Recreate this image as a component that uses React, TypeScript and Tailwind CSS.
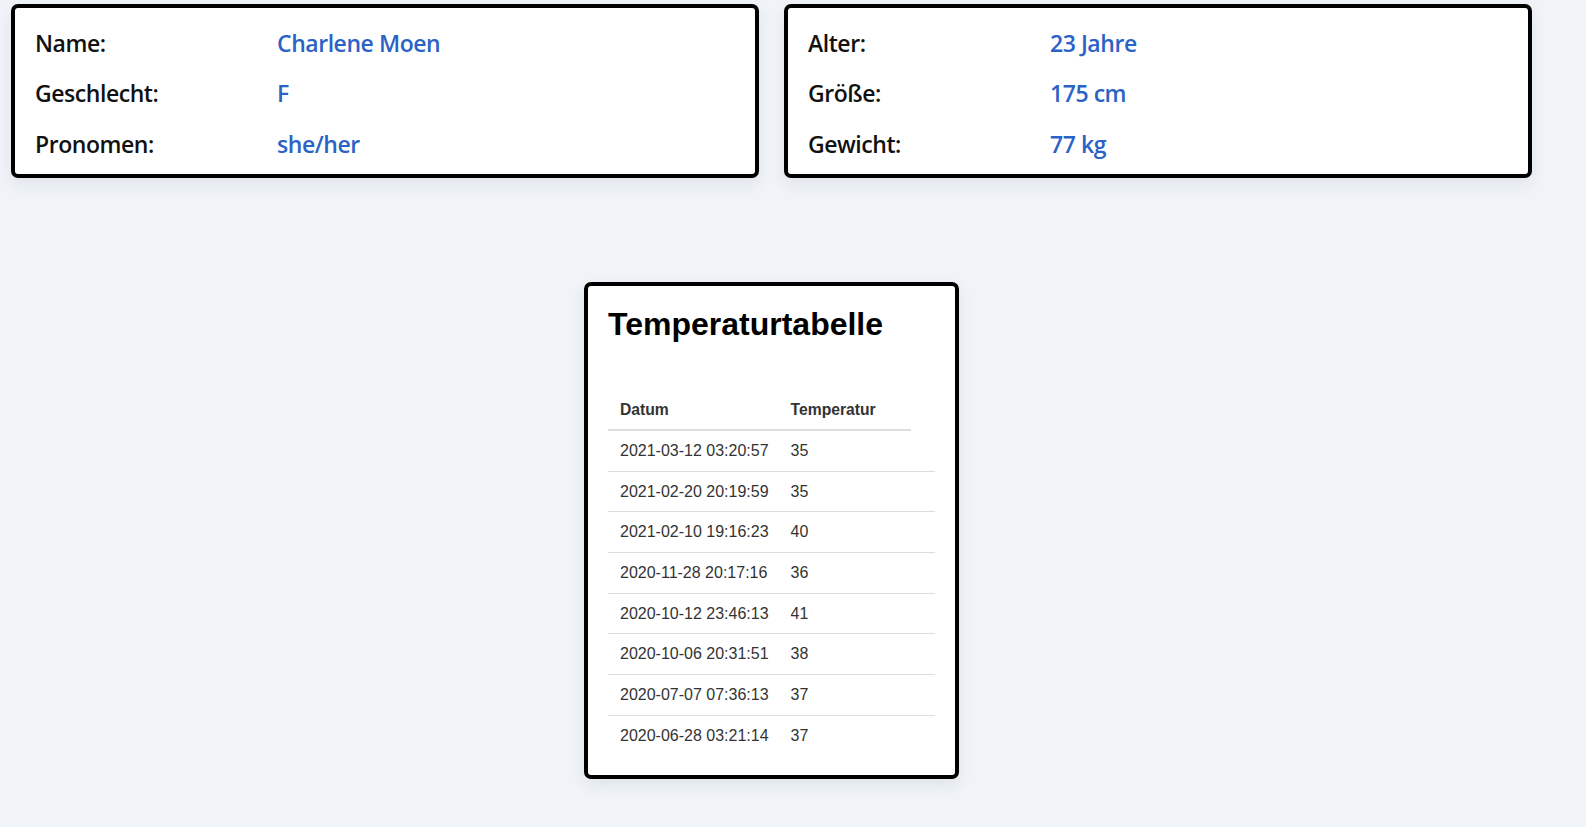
import React from 'react';

interface InfoRow {
  label: string;
  value: string;
}

const leftRows: InfoRow[] = [
  { label: 'Name:', value: 'Charlene Moen' },
  { label: 'Geschlecht:', value: 'F' },
  { label: 'Pronomen:', value: 'she/her' },
];

const rightRows: InfoRow[] = [
  { label: 'Alter:', value: '23 Jahre' },
  { label: 'Größe:', value: '175 cm' },
  { label: 'Gewicht:', value: '77 kg' },
];

const temperatures = [
  { date: '2021-03-12 03:20:57', temp: 35 },
  { date: '2021-02-20 20:19:59', temp: 35 },
  { date: '2021-02-10 19:16:23', temp: 40 },
  { date: '2020-11-28 20:17:16', temp: 36 },
  { date: '2020-10-12 23:46:13', temp: 41 },
  { date: '2020-10-06 20:31:51', temp: 38 },
  { date: '2020-07-07 07:36:13', temp: 37 },
  { date: '2020-06-28 03:21:14', temp: 37 },
];

const InfoCard: React.FC<{ rows: InfoRow[] }> = ({ rows }) => (
  <div className="w-[748px] h-[174px] bg-white border-4 border-black rounded-[7px] shadow-[0_6px_16px_rgba(30,41,59,0.08)] px-5 pt-[17px]">
    <div className="flex flex-col gap-[14.4px]">
      {rows.map((row) => (
        <div key={row.label} className="flex leading-9 text-[23px] font-semibold tracking-[-0.45px]">
          <span className="w-[242px] text-[#111]">{row.label}</span>
          <span className="text-[#2b62c6]">{row.value}</span>
        </div>
      ))}
    </div>
  </div>
);

export default function App() {
  return (
    <div className="min-h-screen bg-[#f0f4f8] font-['Open_Sans',sans-serif]">
      <div className="w-[1543px]">
        <div className="flex gap-[25px] px-[11px] pt-1">
          <InfoCard rows={leftRows} />
          <InfoCard rows={rightRows} />
        </div>

        <div className="flex justify-center mt-[104px] pb-10">
          <div className="w-[375px] bg-white border-4 border-black rounded-[7px] shadow-[0_6px_16px_rgba(30,41,59,0.08)] p-5 font-['Liberation_Sans',Arial,sans-serif]">
            <h1 className="text-[32px] leading-[37px] font-bold text-black mb-[47px]">Temperaturtabelle</h1>
            <table className="w-full border-collapse text-[#333]">
              <thead>
                <tr>
                  <th className="w-[170px] text-left pl-3 pr-[10px] py-[11px] leading-[17px] text-[15.7px] font-bold border-b-2 border-[#ddd]">
                    Datum
                  </th>
                  <th className="text-left px-3 py-[11px] leading-[17px] text-[15.7px] font-bold border-b-2 border-[#ddd]">
                    Temperatur
                  </th>
                </tr>
              </thead>
              <tbody>
                {temperatures.map((t, i) => (
                  <tr
                    key={t.date}
                    className={i === temperatures.length - 1 ? '' : 'border-b border-[#ddd]'}
                  >
                    <td className="pl-3 pr-[10px] py-[11px] leading-[17.67px] text-base whitespace-nowrap">{t.date}</td>
                    <td className="px-3 py-[11px] leading-[17.67px] text-base">{t.temp}</td>
                    <td className="w-6 px-3"></td>
                  </tr>
                ))}
              </tbody>
            </table>
          </div>
        </div>
      </div>
    </div>
  );
}
